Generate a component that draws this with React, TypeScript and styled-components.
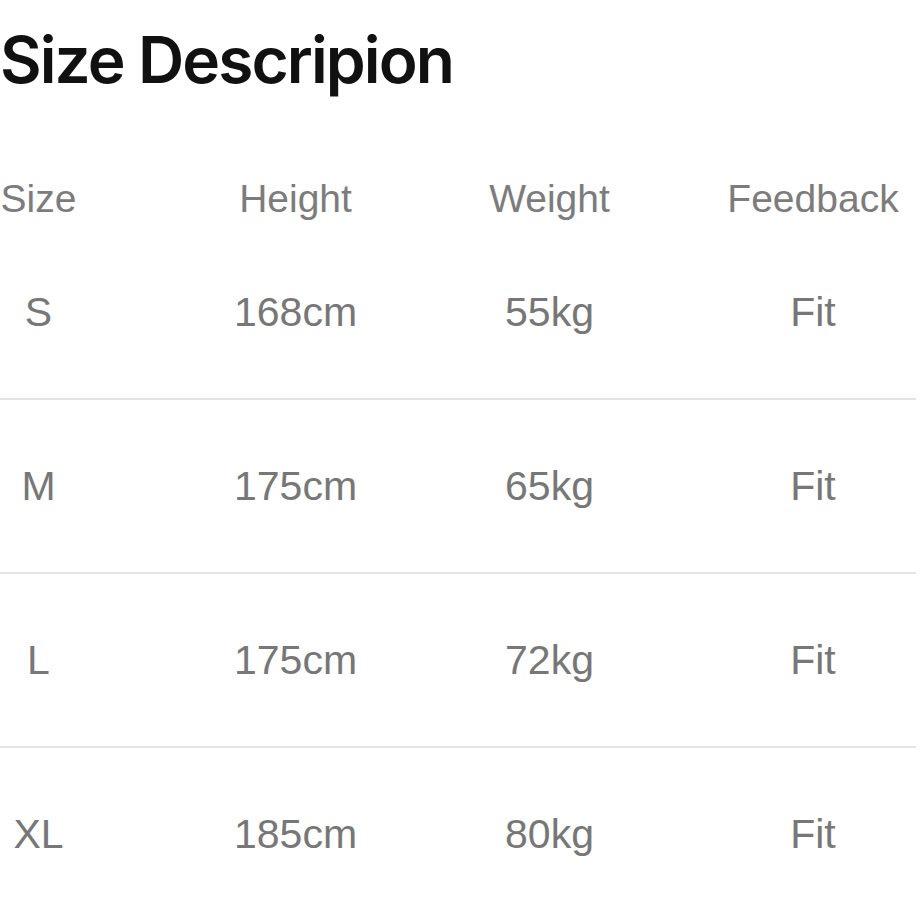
import React from 'react';
import styled, { createGlobalStyle } from 'styled-components';

const GlobalStyle = createGlobalStyle`
  html, body {
    margin: 0;
    padding: 0;
    background: #ffffff;
    overflow: hidden;
  }
  body {
    font-family: "Liberation Sans", Arial, sans-serif;
  }
`;

const Page = styled.div`
  width: 920px;
  height: 920px;
  overflow: hidden;
  background: #fff;
`;

const Title = styled.h1`
  margin: 27px 0 0 0;
  font-family: Inter, "Liberation Sans", sans-serif;
  font-size: 64px;
  line-height: 65px;
  font-weight: 600;
  letter-spacing: -1.9px;
  color: #111;
  white-space: nowrap;
`;

// the chart is cropped on the left, so the table starts off screen
const Table = styled.div`
  margin: 78px 0 0 -90px;
  width: 1041px;
`;

const Row = styled.div<{ $head?: boolean }>`
  display: grid;
  grid-template-columns: 257px 257px 251px 276px;
  align-items: center;
  height: ${(p) => (p.$head ? '56px' : '172px')};
`;

const Cell = styled.div<{ $head?: boolean }>`
  text-align: center;
  font-size: ${(p) => (p.$head ? '39px' : '41px')};
  line-height: 1;
  color: ${(p) => (p.$head ? '#7c7c7c' : '#777777')};
  white-space: nowrap;
`;

const Divider = styled.div`
  margin-left: 90px;
  width: 916px;
  height: 2px;
  background: #e4e4e4;
`;

const headers = ['Size', 'Height', 'Weight', 'Feedback'];

const rows = [
  ['S', '168cm', '55kg', 'Fit'],
  ['M', '175cm', '65kg', 'Fit'],
  ['L', '175cm', '72kg', 'Fit'],
  ['XL', '185cm', '80kg', 'Fit'],
];

export default function App() {
  return (
    <Page>
      <GlobalStyle />
      <Title>Size Descripion</Title>
      <Table>
        <Row $head>
          {headers.map((h) => (
            <Cell $head key={h}>{h}</Cell>
          ))}
        </Row>
        {rows.map((r, i) => (
          <React.Fragment key={r[0]}>
            <Row>
              {r.map((c, j) => (
                <Cell key={j}>{c}</Cell>
              ))}
            </Row>
            {i < rows.length - 1 && <Divider />}
          </React.Fragment>
        ))}
      </Table>
    </Page>
  );
}
